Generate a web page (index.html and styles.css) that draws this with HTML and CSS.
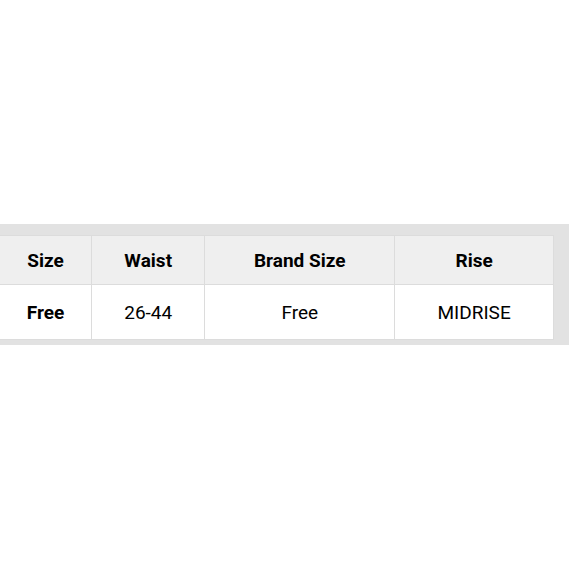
FILE: index.html
```html
<!DOCTYPE html>
<html>
<head>
<meta charset="utf-8">
<link rel="stylesheet" href="styles.css">
</head>
<body>
<div class="band">
  <table class="chart">
    <thead>
      <tr><th class="c1">Size</th><th class="c2">Waist</th><th class="c3">Brand Size</th><th class="c4">Rise</th></tr>
    </thead>
    <tbody>
      <tr><td class="b">Free</td><td>26-44</td><td>Free</td><td>MIDRISE</td></tr>
    </tbody>
  </table>
</div>
</body>
</html>
```
FILE: styles.css
```css
html, body { margin: 0; padding: 0; background: #fff; }
body { font-family: Roboto, "Liberation Sans", sans-serif; color: #000; }
.band {
  margin-top: 224px;
  background: #e2e2e2;
  padding: 11px 15px 5px 0;
  height: 105px;
  overflow: hidden;
}
.chart {
  border-collapse: collapse;
  width: 555px;
  margin-left: -1px;
  background: #fff;
  font-size: 19px;
}
.chart th, .chart td {
  border: 1px solid #dcdcdc;
  text-align: center;
  padding: 0;
}
.chart th { background: #efefef; font-weight: 700; height: 48px; }
.chart td { height: 54px; font-weight: 400; }
.chart td.b { font-weight: 700; }
.c1 { width: 92px; }
.c2 { width: 113px; }
.c3 { width: 191px; }
.c4 { width: 159px; }
```
